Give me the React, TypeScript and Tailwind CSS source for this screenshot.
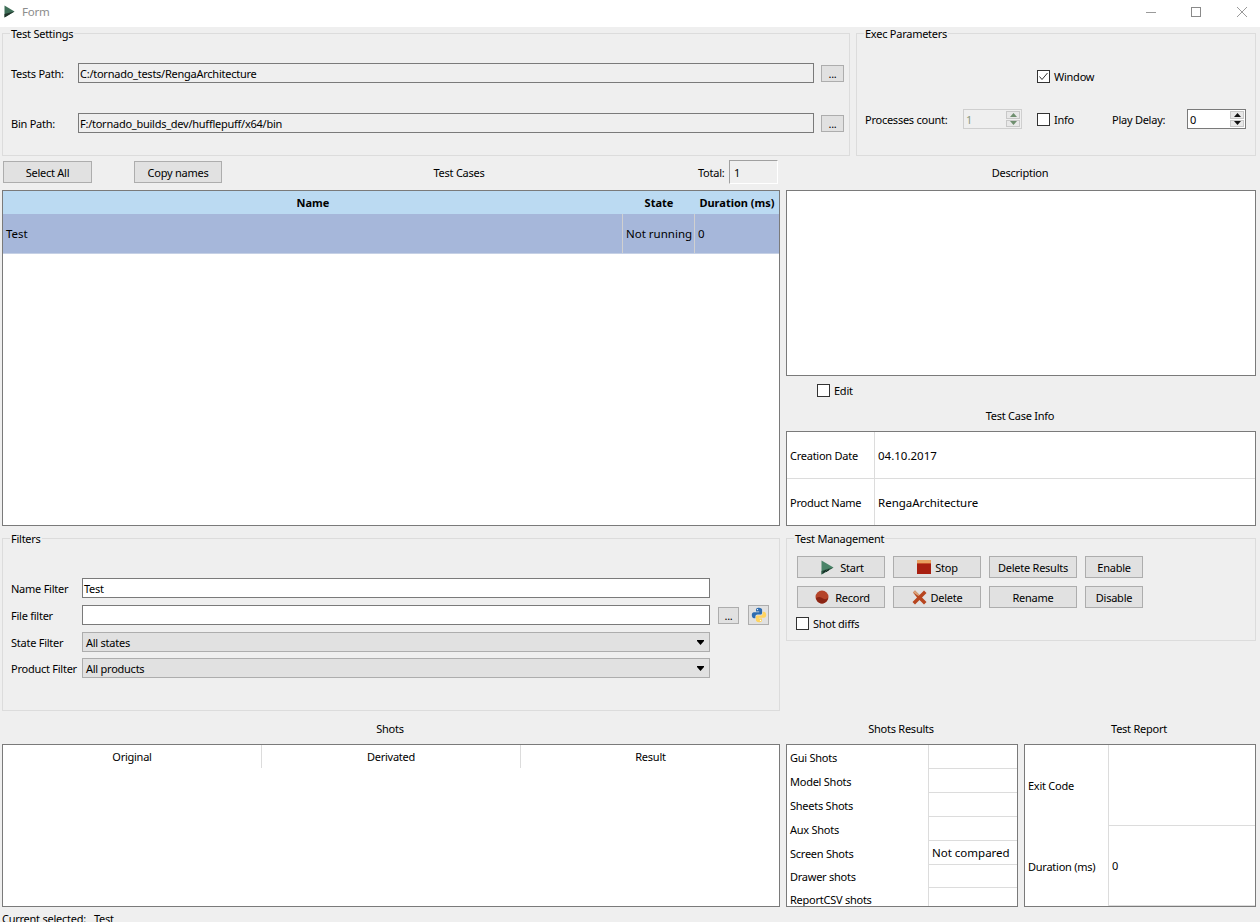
import type { ReactNode } from "react";

const font = "font-['Noto_Sans','Open_Sans',sans-serif]";

function Group({ title, className, children }: { title: string; className: string; children: ReactNode }) {
  return (
    <fieldset className={`border border-[#dcdcdc] ${className}`}>
      <legend className="ml-[7px] px-px leading-[13px]">{title}</legend>
      {children}
    </fieldset>
  );
}

function Btn({ className, children }: { className: string; children: ReactNode }) {
  return (
    <button className={`flex shrink-0 items-center justify-center border border-[#adadad] bg-[#e1e1e1] ${className}`}>
      {children}
    </button>
  );
}

function Field({ value, className }: { value?: string; className: string }) {
  return (
    <div className={`flex items-center border border-[#7a7a7a] pl-[1px] leading-none ${className}`}>
      {value}
    </div>
  );
}

function Check({ label, checked, className }: { label: string; checked?: boolean; className?: string }) {
  return (
    <div className={`flex items-center gap-[4px] ${className ?? ""}`}>
      <div className="flex h-[13px] w-[13px] items-center justify-center border border-[#333] bg-white">
        {checked && (
          <svg width="11" height="11" viewBox="0 0 11 11" fill="none" stroke="#333" strokeWidth="1">
            <path d="M1.5 5.5 L4 8.5 L9.5 2" />
          </svg>
        )}
      </div>
      <span>{label}</span>
    </div>
  );
}

function Spin({ value, disabled, className }: { value: string; disabled?: boolean; className?: string }) {
  const arrow = disabled ? "#6f8f6f" : "#111";
  const edge = disabled ? "border-[#cfcfcf]" : "border-[#7a7a7a]";
  return (
    <div className={`flex h-[20px] w-[59px] shrink-0 items-center justify-between border ${edge} pl-[2px] ${disabled ? "text-[#8a9a80]" : "bg-white"} ${className ?? ""}`}>
      <span>{value}</span>
      <div className="flex h-[16px] w-[14px] flex-col gap-px mr-px">
        <div className="flex flex-1 items-center justify-center border border-[#c8c8c8] bg-[#e8e8e8]">
          <svg width="7" height="4" viewBox="0 0 7 4"><path d="M3.5 0 L7 4 H0 Z" fill={arrow} /></svg>
        </div>
        <div className="flex flex-1 items-center justify-center border border-[#c8c8c8] bg-[#e8e8e8]">
          <svg width="7" height="4" viewBox="0 0 7 4"><path d="M0 0 H7 L3.5 4 Z" fill={arrow} /></svg>
        </div>
      </div>
    </div>
  );
}

function Combo({ value }: { value: string }) {
  return (
    <div className="flex h-[20px] w-[628px] items-center justify-between border border-[#adadad] bg-[#e1e1e1] pl-[3px] pr-[5px]">
      <span>{value}</span>
      <svg width="7" height="5" viewBox="0 0 7 5"><path d="M0 0 H7 V1 L3.5 5 L0 1 Z" fill="#000" /></svg>
    </div>
  );
}

function PlayIcon() {
  return (
    <svg width="13" height="15" viewBox="0 0 13 15">
      <path d="M0.5 0.5 L12.5 7.5 L0.5 14.5 Z" fill="#4a8468" />
      <path d="M0.5 14.5 L12.5 7.5 L6 9 L0.5 11 Z" fill="#2c5443" />
      <path d="M2 12.5 L4.5 10.5 L5.5 11.500 L8 9.500" stroke="#0b1a14" fill="none" />
    </svg>
  );
}

function StopIcon() {
  return (
    <svg width="14" height="14" viewBox="0 0 14 14">
      <rect width="14" height="14" fill="#a81f10" />
      <rect width="14" height="3" fill="#e8a060" />
      <rect y="3" width="14" height="1" fill="#c8502a" />
    </svg>
  );
}

function RecordIcon() {
  return (
    <svg width="14" height="14" viewBox="0 0 14 14">
      <circle cx="7" cy="7" r="6.5" fill="#b5442a" />
      <path d="M1 8 C4 6 6 7 8 8.5 C10 10 12 9 13 7.5 C13 11 10 13.5 7 13.5 C4 13.5 1.5 11 1 8 Z" fill="#8a2414" />
    </svg>
  );
}

function DeleteIcon() {
  return (
    <svg width="15" height="15" viewBox="0 0 15 15">
      <path d="M1 2.5 L3 0.5 L7.5 5 L12 0.5 L14.5 3 L10 7.500 L14.5 12 L12 14.5 L7.500 10 L3 14.5 L0.5 12 L5 7.500 Z" fill="#b7451f" />
      <path d="M1 2.5 L3 0.5 L7.500 5 L6.500 6 Z" fill="#d9a37a" />
    </svg>
  );
}

function PythonIcon() {
  const d = "M8 .8C5.2.8 5 2 5 3v1.6h3.2v.6H3C1.6 5.200.8 6.300.8 8s.8 3.200 2.200 3.200h1.400V9.300c0-1 .9-1.900 2-1.900h3.200c.9 0 1.500-.7 1.500-1.500V3C11.100 1.800 10 .8 8 .8z";
  return (
    <svg width="16" height="16" viewBox="0 0 16 16">
      <path d={d} fill="#2d6cb0" />
      <path d={d} fill="#ffd45f" transform="rotate(180 8 8)" />
      <circle cx="6.500" cy="2.600" r=".7" fill="#fff" />
      <circle cx="9.500" cy="13.400" r=".7" fill="#fff" />
    </svg>
  );
}

const shotRows = [
  { name: "Gui Shots", value: "", h: "h-[24px]" },
  { name: "Model Shots", value: "", h: "h-[24px]" },
  { name: "Sheets Shots", value: "", h: "h-[24px]" },
  { name: "Aux Shots", value: "", h: "h-[24px]" },
  { name: "Screen Shots", value: "Not compared", h: "h-[24px]" },
  { name: "Drawer shots", value: "", h: "h-[23px]" },
  { name: "ReportCSV shots", value: "", h: "h-[22px] shrink-0" },
];

export default function App() {
  return (
    <div className={`${font} flex h-[922px] w-[1260px] flex-col overflow-hidden bg-[#efefef] text-[11px] leading-[13px] tracking-[-0.25px] text-black`}>
      {/* title bar */}
      <div className="flex h-[27px] shrink-0 items-center bg-white pb-[4px] pl-[4px]">
        <svg width="11" height="13" viewBox="0 0 11 13">
          <path d="M0.5 0.5 L10.500 6.500 L0.500 12.500 Z" fill="#3f6f58" />
          <path d="M0.500 12.500 L10.500 6.500 L0.500 9 Z" fill="#22332b" />
        </svg>
        <span className="ml-[7px] text-[11.5px] text-[#8c8c8c]">Form</span>
        <div className="ml-auto flex items-center pr-[13px]">
          <svg width="10" height="10" viewBox="0 0 10 10" stroke="#9a9a9a" fill="none"><path d="M0 5.500 H10" /></svg>
          <svg className="ml-[35px]" width="10" height="10" viewBox="0 0 10 10" stroke="#8a8a8a" fill="none"><rect x=".5" y=".5" width="9" height="9" /></svg>
          <svg className="ml-[36px]" width="10" height="10" viewBox="0 0 10 10" stroke="#9a9a9a" fill="none"><path d="M0 0 L10 10 M10 0 L0 10" /></svg>
        </div>
      </div>

      {/* settings */}
      <div className="flex h-[129px] shrink-0 gap-[6px] pl-[2px]">
        <Group title="Test Settings" className="h-[129px] w-[848px] shrink-0">
          <div className="flex flex-col gap-[30px] pl-[8px] pt-[23px]">
            {[
              { label: "Tests Path:", value: "C:/tornado_tests/RengaArchitecture" },
              { label: "Bin Path:", value: "F:/tornado_builds_dev/hufflepuff/x64/bin" },
            ].map((row) => (
              <div key={row.label} className="flex h-[20px] items-center">
                <span className="w-[67px] shrink-0">{row.label}</span>
                <Field value={row.value} className="h-[20px] w-[736px]" />
                <Btn className="ml-[7px] h-[17px] w-[23px]">...</Btn>
              </div>
            ))}
          </div>
        </Group>
        <Group title="Exec Parameters" className="h-[129px] w-[400px] shrink-0">
          <div className="pl-[180px] pt-[30px]">
            <Check label="Window" checked />
          </div>
          <div className="mt-[26px] flex h-[20px] items-center pl-[8px]">
            <span className="w-[98px] shrink-0">Processes count:</span>
            <Spin value="1" disabled />
            <Check label="Info" className="ml-[15px] w-[75px] shrink-0" />
            <span className="w-[75px] shrink-0">Play Delay:</span>
            <Spin value="0" />
          </div>
        </Group>
      </div>

      {/* main columns */}
      <div className="flex h-[555px] shrink-0 gap-[6px] pl-[2px]">
        <div className="flex w-[778px] shrink-0 flex-col">
          <div className="mt-[4px] flex h-[24px] items-center pr-[2px]">
            <Btn className="ml-px h-[22px] w-[89px]">Select All</Btn>
            <Btn className="ml-[42px] h-[22px] w-[88px]">Copy names</Btn>
            <div className="flex-1 pr-[2px] text-center">Test Cases</div>
            <span className="w-[31px] shrink-0">Total:</span>
            <div className="flex h-[24px] w-[49px] shrink-0 items-center border border-t-[#a0a0a0] border-l-[#a0a0a0] border-r-white border-b-white pl-[4px]">1</div>
          </div>
          <div className="mt-[6px] flex h-[336px] flex-col border border-[#7a7a7a] bg-white text-[11.5px] tracking-normal">
            <div className="grid h-[23px] shrink-0 grid-cols-[620px_72px_84px] items-center bg-[#bbdaf2] text-center text-[11px] font-bold">
              <span>Name</span>
              <span>State</span>
              <span>Duration (ms)</span>
            </div>
            <div className="grid h-[40px] shrink-0 grid-cols-[620px_72px_84px] border-b border-[#c5d0e5] bg-[#a6b7da]">
              <span className="flex items-center border-r border-[#d0d0d0] pl-[3px]">Test</span>
              <span className="flex items-center border-r border-[#d0d0d0] pl-[3px]">Not running</span>
              <span className="flex items-center pl-[3px]">0</span>
            </div>
          </div>
          <Group title="Filters" className="mt-[6px] h-[179px]">
            <div className="flex flex-col pl-[8px] pt-[33px]">
              <div className="flex h-[20px] items-center">
                <span className="w-[71px] shrink-0">Name Filter</span>
                <Field value="Test" className="h-[20px] w-[628px] bg-white" />
              </div>
              <div className="mt-[7px] flex h-[20px] items-center">
                <span className="w-[71px] shrink-0">File filter</span>
                <Field className="h-[20px] w-[628px] bg-white" />
                <Btn className="ml-[8px] h-[17px] w-[21px]">...</Btn>
                <Btn className="ml-[9px] h-[20px] w-[21px]"><PythonIcon /></Btn>
              </div>
              <div className="mt-[7px] flex h-[20px] items-center">
                <span className="w-[71px] shrink-0">State Filter</span>
                <Combo value="All states" />
              </div>
              <div className="mt-[6px] flex h-[20px] items-center">
                <span className="w-[71px] shrink-0">Product Filter</span>
                <Combo value="All products" />
              </div>
            </div>
          </Group>
        </div>

        <div className="flex w-[470px] shrink-0 flex-col">
          <div className="mt-[4px] flex h-[24px] items-center justify-center pr-[2px]">Description</div>
          <div className="mt-[6px] h-[186px] border border-[#7a7a7a] bg-white" />
          <Check label="Edit" className="ml-[31px] mt-[8px]" />
          <div className="mt-[12px] pr-[2px] text-center">Test Case Info</div>
          <div className="mt-[9px] flex h-[95px] flex-col border border-[#7a7a7a] bg-white">
            <div className="flex h-[47px] items-center border-b border-[#dcdcdc]">
              <span className="flex h-full w-[88px] items-center border-r border-[#dcdcdc] pl-[3px]">Creation Date</span>
              <span className="pl-[3px] text-[11.5px] tracking-normal">04.10.2017</span>
            </div>
            <div className="flex flex-1 items-center">
              <span className="flex h-full w-[88px] items-center border-r border-[#dcdcdc] pl-[3px] pt-px">Product Name</span>
              <span className="pl-[3px] text-[11.5px] tracking-normal">RengaArchitecture</span>
            </div>
          </div>
          <Group title="Test Management" className="mt-[6px] h-[109px]">
            <div className="flex flex-col gap-[8px] pl-[10px] pt-[11px]">
              <div className="flex gap-[8px]">
                <Btn className="h-[22px] w-[88px] gap-[6px] pl-[3px]"><PlayIcon />Start</Btn>
                <Btn className="h-[22px] w-[88px] gap-[4px] pl-px"><StopIcon />Stop</Btn>
                <Btn className="h-[22px] w-[88px]">Delete Results</Btn>
                <Btn className="h-[22px] w-[58px]">Enable</Btn>
              </div>
              <div className="flex gap-[8px]">
                <Btn className="h-[22px] w-[88px] gap-[6px] pl-[3px]"><RecordIcon />Record</Btn>
                <Btn className="h-[22px] w-[88px] gap-[4px]"><DeleteIcon />Delete</Btn>
                <Btn className="h-[22px] w-[88px]">Rename</Btn>
                <Btn className="h-[22px] w-[58px]">Disable</Btn>
              </div>
            </div>
            <Check label="Shot diffs" className="ml-[9px] mt-[9px]" />
          </Group>
        </div>
      </div>

      {/* results */}
      <div className="flex shrink-0 gap-[6px] pl-[2px]">
        <div className="w-[778px] shrink-0">
          <div className="h-[33px] pr-[2px] pt-[11px] text-center">Shots</div>
          <div className="h-[163px] border border-[#7a7a7a] bg-white">
            <div className="flex h-[23px] w-[777px] items-center text-center">
              <span className="flex h-full w-[259px] items-center justify-center border-r border-[#dcdcdc]">Original</span>
              <span className="flex h-full w-[259px] items-center justify-center border-r border-[#dcdcdc]">Derivated</span>
              <span className="flex h-full w-[259px] items-center justify-center">Result</span>
            </div>
          </div>
        </div>
        <div className="w-[232px] shrink-0">
          <div className="h-[33px] pr-[2px] pt-[11px] text-center">Shots Results</div>
          <div className="h-[163px] overflow-hidden border border-[#7a7a7a] bg-white">
            {shotRows.map((row) => (
              <div key={row.name} className={`flex ${row.h}`}>
                <span className="flex w-[141px] shrink-0 items-center pl-[3px]">{row.name}</span>
                <span className="flex flex-1 items-center border-b border-l border-[#dcdcdc] pl-[3px] text-[11.5px] tracking-normal">{row.value}</span>
              </div>
            ))}
          </div>
        </div>
        <div className="w-[232px] shrink-0">
          <div className="h-[33px] pr-[2px] pt-[11px] text-center">Test Report</div>
          <div className="flex h-[163px] flex-col border border-[#7a7a7a] bg-white">
            <div className="flex h-[81px]">
              <span className="flex w-[83px] shrink-0 items-center pl-[3px]">Exit Code</span>
              <span className="flex-1 border-b border-l border-[#dcdcdc]" />
            </div>
            <div className="flex flex-1">
              <span className="flex w-[83px] shrink-0 items-center pl-[3px]">Duration (ms)</span>
              <span className="flex flex-1 items-center border-b border-l border-[#dcdcdc] pl-[3px]">0</span>
            </div>
          </div>
        </div>
      </div>

      <div className="mt-[5px] flex shrink-0 pl-[2px]">
        <span className="w-[92px]">Current selected:</span>
        <span>Test</span>
      </div>
    </div>
  );
}
